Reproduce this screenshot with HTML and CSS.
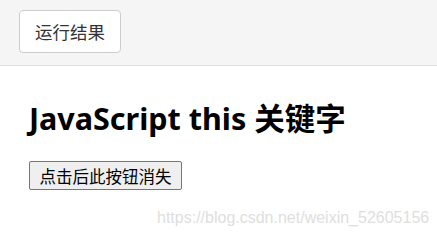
FILE: index.html
```html
<!DOCTYPE html>
<html lang="zh">
<head>
<meta charset="utf-8">
<link rel="stylesheet" href="styles.css">
</head>
<body>
<div class="topbar">
  <button class="tab">运行结果</button>
</div>
<main class="content">
  <h1 class="title">JavaScript this 关键字</h1>
  <button class="btn">点击后此按钮消失</button>
</main>
<div class="watermark">https://blog.csdn.net/weixin_52605156</div>
</body>
</html>
```
FILE: styles.css
```css
html, body {
  margin: 0;
  padding: 0;
  background: #fff;
  width: 437px;
  height: 242px;
  overflow: hidden;
  position: relative;
  font-family: "Noto Sans", "Noto Sans CJK SC", sans-serif;
}
.topbar {
  height: 66px;
  box-sizing: border-box;
  background: #f5f5f5;
  border-bottom: 1px solid #e0e0e0;
  padding: 10px 19px;
  display: flex;
  align-items: flex-start;
}
.tab {
  width: 102px;
  height: 43px;
  background: #fff;
  border: 1px solid #cccccc;
  border-radius: 4px;
  font-family: "Noto Sans CJK SC", sans-serif;
  font-size: 17.5px;
  color: #333;
  padding: 0;
  margin: 0;
}
.content {
  padding: 0 29px;
}
.title {
  margin: 34px 0 25px;
  font-family: "Noto Sans", "Noto Sans CJK SC", sans-serif;
  font-size: 30.5px;
  font-weight: 700;
  line-height: 36px;
  color: #000;
}
.btn {
  width: 153px;
  height: 29px;
  background: #efefef;
  border: 1px solid #767676;
  border-radius: 2px;
  font-family: "Noto Sans CJK SC", sans-serif;
  font-size: 16.5px;
  color: #000;
  padding: 0;
  margin: 0;
}
.watermark {
  position: absolute;
  left: 157px;
  top: 209px;
  font-family: "Liberation Sans", Arial, sans-serif;
  font-size: 16px;
  color: #dedede;
  white-space: nowrap;
}
```
